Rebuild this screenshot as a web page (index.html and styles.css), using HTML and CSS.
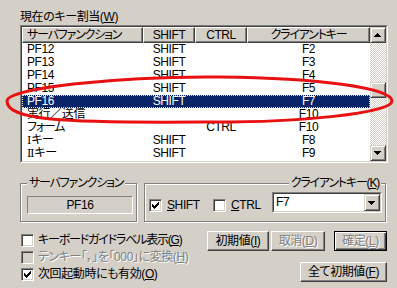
FILE: index.html
```html
<!DOCTYPE html>
<html lang="ja">
<head>
<meta charset="utf-8">
<link rel="stylesheet" href="styles.css">
</head>
<body>
<div class="page">
  <div class="caption">現在のキー割当(<u>W</u>)</div>
  <div class="listbox">
    <div class="listbox-in">
      <div class="list">
        <div class="hdr">
          <div class="hc left kana">サーバファンクション</div>
          <div class="hc">SHIFT</div>
          <div class="hc">CTRL</div>
          <div class="hc kana">クライアントキー</div>
        </div>
        <div class="row"><span class="c1">PF12</span><span>SHIFT</span><span></span><span>F2</span></div>
        <div class="row"><span class="c1">PF13</span><span>SHIFT</span><span></span><span>F3</span></div>
        <div class="row"><span class="c1">PF14</span><span>SHIFT</span><span></span><span>F4</span></div>
        <div class="row"><span class="c1">PF15</span><span>SHIFT</span><span></span><span>F5</span></div>
        <div class="row sel"><span class="c1">PF16</span><span>SHIFT</span><span></span><span>F7</span></div>
        <div class="row"><span class="c1">実行／送信</span><span></span><span></span><span>F10</span></div>
        <div class="row"><span class="c1 kana">フォーム</span><span></span><span>CTRL</span><span>F10</span></div>
        <div class="row"><span class="c1"><span class="rn">Ⅰ</span>キー</span><span>SHIFT</span><span></span><span>F8</span></div>
        <div class="row"><span class="c1"><span class="rn">Ⅱ</span>キー</span><span>SHIFT</span><span></span><span>F9</span></div>
        <div class="row part"><span class="c1"><span class="rn">Ⅲ</span>キー</span><span></span><span></span><span></span></div>
      </div>
      <div class="vscroll">
        <div class="sbtn"><svg width="14" height="14" viewBox="0 0 14 14"><path d="M6 5h1v1h1v1h1v1h1v1H3V8h1V7h1V6h1z" fill="#000"/></svg></div>
        <div class="track"><div class="thumb"></div></div>
        <div class="sbtn"><svg width="14" height="14" viewBox="0 0 14 14"><path d="M3 5h7v1H9v1H8v1H7v1H6V8H5V7H4V6H3z" fill="#000"/></svg></div>
      </div>
    </div>
  </div>

  <div class="groups">
    <div class="group g1">
      <span class="legend kana">サーバファンクション</span>
      <div class="static">PF16</div>
    </div>
    <div class="group g2">
      <span class="legend right kana">クライアントキー(<u>K</u>)</span>
      <div class="chk shift">
        <span class="box"><svg width="11" height="11" viewBox="0 0 11 11"><path d="M2 4h1v1h1v1h1V5h1V4h1V3h1V2h1v3H8v1H7v1H6v1H5v1H4V8H3V7H2z" fill="#000"/></svg></span>
        <span class="txt"><u>S</u>HIFT</span>
      </div>
      <div class="chk ctrl">
        <span class="box"></span>
        <span class="txt"><u>C</u>TRL</span>
      </div>
      <div class="combo">
        <div class="combo-in">
          <span class="val">F7</span>
          <span class="drop"><svg width="14" height="15" viewBox="0 0 14 15"><path d="M3 6h7v1H9v1H8v1H7v1H6V9H5V8H4V7H3z" fill="#000"/></svg></span>
        </div>
      </div>
    </div>
  </div>

  <div class="bottom">
    <div class="opts">
      <div class="opt"><span class="box"></span><span class="txt kana">キーボードガイドラベル表示(<u>G</u>)</span></div>
      <div class="opt dis"><span class="box"></span><span class="txt">テンキー「，」を「000」に変換(<u>H</u>)</span></div>
      <div class="opt"><span class="box"><svg width="11" height="11" viewBox="0 0 11 11"><path d="M2 4h1v1h1v1h1V5h1V4h1V3h1V2h1v3H8v1H7v1H6v1H5v1H4V8H3V7H2z" fill="#000"/></svg></span><span class="txt">次回起動時にも有効(<u>O</u>)</span></div>
    </div>
    <div class="btns">
      <div class="btnrow">
        <div class="btn b-init">初期値(<u>I</u>)</div>
        <div class="btn b-cancel dis">取消(<u>D</u>)</div>
        <div class="btn b-ok def dis">確定(<u>L</u>)</div>
      </div>
      <div class="btnrow">
        <div class="btn b-all">全て初期値(<u>F</u>)</div>
      </div>
    </div>
  </div>

  <svg class="mark" width="397" height="288" viewBox="0 0 397 288">
    <path d="M7 101 C7 88 120 76 220 77 C320 78 392 88 392 101 C392 113 300 123 200 122 C60 123 7 120 7 101 Z" fill="none" stroke="#e81010" stroke-width="3"/>
  </svg>
</div>
</body>
</html>
```

FILE: styles.css
```css
* { box-sizing: border-box; margin: 0; padding: 0; }
html, body { width: 397px; height: 288px; overflow: hidden; }
body {
  background: #d4d0c8;
  color: #000;
  font-family: "Liberation Sans", "Noto Sans CJK JP", sans-serif;
  font-size: 12px;
  letter-spacing: -0.4px;
  font-feature-settings: "palt";
}
u { text-decoration: underline; text-underline-offset: 1px; }
.kana { letter-spacing: -1.2px; }
.rn { font-family: "DejaVu Serif", "Liberation Serif", "Noto Sans CJK JP", serif; font-size: 11px; letter-spacing: 0; }

.page { position: relative; height: 288px; padding: 10px 9px 0 20px; }

.caption { height: 15px; line-height: 14px; }

/* list box */
.listbox {
  height: 138px;
  border: 1px solid;
  border-color: #808080 #fff #fff #808080;
}
.listbox-in {
  height: 100%;
  border: 1px solid;
  border-color: #404040 #d4d0c8 #d4d0c8 #404040;
  background: #fff;
  display: flex;
}
.list { flex: 1; overflow: hidden; }
.hdr, .row { display: grid; grid-template-columns: 121px 52px 52px 123px; }
.hdr { height: 16px; }
.hc {
  background: #d4d0c8;
  border: 1px solid;
  border-color: #fff #404040 #404040 #fff;
  box-shadow: inset -1px -1px #808080;
  line-height: 14px;
  text-align: center;
  white-space: nowrap;
  overflow: hidden;
}
.hc.left { text-align: left; padding-left: 4px; }
.row { height: 13px; line-height: 13px; white-space: nowrap; }
.row span { text-align: center; }
.row .c1 { text-align: left; padding-left: 5px; }
.row.part { line-height: 15px; }
.row.sel {
  background: #0a246a;
  color: #fff;
  outline: 1px dotted #e8dca0;
  outline-offset: -1px;
}

.vscroll { width: 16px; display: flex; flex-direction: column; }
.sbtn {
  width: 16px; height: 16px;
  background: #d4d0c8;
  border: 1px solid;
  border-color: #d4d0c8 #404040 #404040 #d4d0c8;
  box-shadow: inset 1px 1px #fff, inset -1px -1px #808080;
}
.sbtn svg { display: block; }
.track {
  flex: 1;
  background-image: repeating-conic-gradient(#fff 0 25%, #d4d0c8 0 50%);
  background-size: 2px 2px;
}
.thumb {
  margin-top: 39px;
  height: 16px;
  background: #d4d0c8;
  border: 1px solid;
  border-color: #d4d0c8 #404040 #404040 #d4d0c8;
  box-shadow: inset 1px 1px #fff, inset -1px -1px #808080;
}

/* group boxes */
.groups { display: flex; margin-top: 20px; }
.group {
  position: relative;
  height: 39px;
  border: 1px solid #808080;
  box-shadow: inset 1px 1px #fff, 1px 1px #fff;
}
.g1 { width: 117px; }
.g2 { width: 242px; margin-left: 7px; display: flex; align-items: flex-start; padding-left: 4px; }
.legend {
  position: absolute;
  top: -8px;
  left: 6px;
  padding: 0 2px;
  background: #d4d0c8;
  line-height: 14px;
  white-space: nowrap;
}
.legend.right { left: auto; right: 4px; }
.static {
  margin: 12px 0 0 6px;
  width: 106px;
  height: 18px;
  border: 1px solid;
  border-color: #808080 #fff #fff #808080;
  text-align: center;
  line-height: 16px;
}

.box {
  width: 13px; height: 13px;
  flex: none;
  background: #fff;
  border: 1px solid;
  border-color: #808080 #fff #fff #808080;
  box-shadow: inset 1px 1px #404040, inset -1px -1px #d4d0c8;
  display: flex;
  align-items: center;
  justify-content: center;
}
.box svg { display: block; }
.chk { display: flex; align-items: center; margin-top: 15px; height: 13px; }
.chk .txt { margin-left: 5px; line-height: 13px; }
.chk.shift { width: 64px; }
.chk.ctrl { width: 59px; }

.combo {
  margin-top: 8px;
  width: 110px;
  height: 21px;
  border: 1px solid;
  border-color: #808080 #fff #fff #808080;
}
.combo-in {
  height: 100%;
  border: 1px solid;
  border-color: #404040 #d4d0c8 #d4d0c8 #404040;
  background: #fff;
  display: flex;
  align-items: center;
}
.combo .val { flex: 1; padding-left: 2px; line-height: 15px; }
.drop {
  width: 16px; height: 17px;
  background: #d4d0c8;
  border: 1px solid;
  border-color: #d4d0c8 #404040 #404040 #d4d0c8;
  box-shadow: inset 1px 1px #fff, inset -1px -1px #808080;
}
.drop svg { display: block; }

/* bottom */
.bottom { display: flex; margin-right: 1px; }
.opts { padding-top: 12px; padding-left: 1px; }
.opt { display: flex; height: 17px; align-items: flex-start; }
.opt .txt { margin-left: 4px; line-height: 13px; white-space: nowrap; }
.opt.dis .box { background: #d4d0c8; }
.dis .txt, .btn.dis { color: #808080; text-shadow: 1px 1px #fff; }

.btns { margin-left: auto; padding-top: 9px; display: flex; flex-direction: column; align-items: flex-end; }
.btnrow { display: flex; }
.btnrow + .btnrow { margin-top: 11px; }
.btn {
  height: 20px;
  border: 1px solid;
  border-color: #fff #404040 #404040 #fff;
  box-shadow: inset -1px -1px #808080;
  text-align: center;
  line-height: 18px;
  white-space: nowrap;
}
.btn.def {
  border-color: #000;
  box-shadow: inset 1px 1px #fff, inset -1px -1px #404040, inset -2px -2px #808080;
}
.b-init { width: 62px; }
.b-cancel { width: 54px; margin-left: 2px; }
.b-ok { width: 53px; margin-left: 9px; }
.b-all { width: 87px; }

.mark { position: absolute; left: 0; top: 0; pointer-events: none; }
```
